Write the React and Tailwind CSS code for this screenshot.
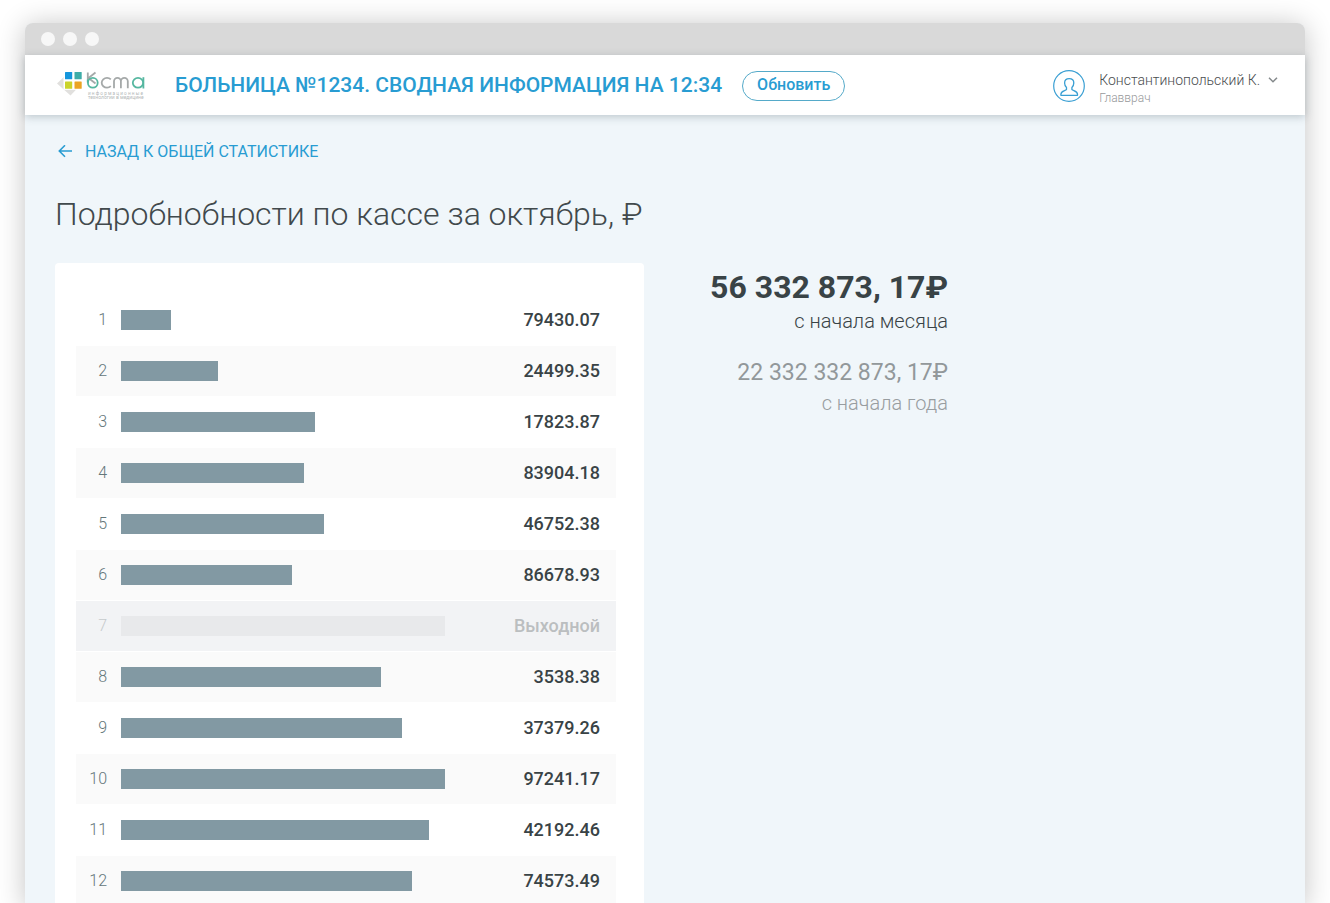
const days = [
  { day: 1, value: "79430.07", bar: 50 },
  { day: 2, value: "24499.35", bar: 97 },
  { day: 3, value: "17823.87", bar: 194 },
  { day: 4, value: "83904.18", bar: 183 },
  { day: 5, value: "46752.38", bar: 203 },
  { day: 6, value: "86678.93", bar: 171 },
  { day: 7, value: "Выходной", bar: 324, off: true },
  { day: 8, value: "3538.38", bar: 260 },
  { day: 9, value: "37379.26", bar: 281 },
  { day: 10, value: "97241.17", bar: 324 },
  { day: 11, value: "42192.46", bar: 308 },
  { day: 12, value: "74573.49", bar: 291 },
];

const longestBar = 324;

function Logo() {
  return (
    <svg width="90" height="34" viewBox="0 0 90 34" role="img" aria-label="Коста">
      <path d="M0 14.500 12.500 2.500 25 14.500 13.500 26.500Z" fill="#e1e0de" />
      <path d="M6.500 2h19v18.800h-19z" fill="#fff" />
      <rect x="8" y="3" width="7.200" height="7.200" rx="0.500" fill="#1596dc" />
      <rect x="17.500" y="3" width="7.200" height="7.200" rx="0.500" fill="#3eada8" />
      <rect x="8" y="12.500" width="7.200" height="7.200" rx="0.500" fill="#cad32a" />
      <rect x="17.500" y="12.500" width="7.200" height="7.200" rx="0.500" fill="#eba423" />
      <g fill="none" strokeWidth="1.800">
        <g stroke="#a5a9a9">
          <path d="M30.800 3.500v10M38.500 3.500l-7 5.500 7 5.500" />
          <path d="M53.800 10.400a5.300 4.900 0 1 0 0 6.800" />
          <path d="M57 19.300v-7a3.400 3.400 0 0 1 6.900 0V19.300M63.900 19.300v-7a3.400 3.400 0 0 1 6.900 0V19.300" />
        </g>
        <g stroke="#55b7a0">
          <path d="M30.800 10.500v3" />
          <circle cx="35.800" cy="13.800" r="4.900" />
          <ellipse cx="81" cy="13.800" rx="5.200" ry="4.900" />
          <path d="M86.400 8.200v11.300" />
        </g>
      </g>
      <g fill="#b4b8b8" fontFamily="Roboto, sans-serif">
        <text x="31" y="25.500" fontSize="4.700">и н ф о р м а ц и о н н ы е</text>
        <text x="31" y="30.300" fontSize="5">технологии в медицине</text>
      </g>
    </svg>
  );
}

function UserIcon() {
  return (
    <svg width="32" height="32" viewBox="0 0 32 32" fill="none" stroke="#3a9fd3" aria-hidden="true">
      <circle cx="16" cy="16" r="15.300" strokeWidth="1.200" />
      <path
        strokeWidth="1.300"
        strokeLinejoin="round"
        d="M13.500 17.500C12 16 11.600 14.500 11.600 13c0-2.800 1.700-4.300 4.600-4.300s4.600 1.500 4.600 4.300c0 1.500-.4 3-1.900 4.500v2c1.300 1.300 5.600 1.300 5.600 4.700v1.100H7.900v-1.100c0-3.400 4.300-3.400 5.600-4.700z"
      />
    </svg>
  );
}

function Header() {
  return (
    <header className="relative flex h-15 items-center bg-white pt-0.5 pl-8 pr-[27px] shadow-[0_2px_8px_rgba(60,80,90,0.28)]">
      <Logo />
      <h1 className="ml-7 pb-0.5 text-[21px] leading-6 font-medium whitespace-nowrap text-[#289cd2]">
        БОЛЬНИЦА №1234. СВОДНАЯ ИНФОРМАЦИЯ НА 12:34
      </h1>
      <button
        type="button"
        className="ml-5 h-[30px] rounded-full border border-[#55aac9] px-3.5 pb-0.5 text-base leading-5 font-medium text-[#289cd2]"
      >
        Обновить
      </button>
      <button type="button" className="ml-auto flex items-center gap-3.5 text-left">
        <UserIcon />
        <span className="flex flex-col pt-1">
          <span className="flex items-center gap-2 text-sm leading-5 font-light text-[#4a4d4f]">
            Константинопольский К.
            <svg width="10" height="6" viewBox="0 0 10 6" fill="none" stroke="#858a8c" strokeWidth="1.500" aria-hidden="true">
              <path d="m1 .7 4 4 4-4" />
            </svg>
          </span>
          <span className="text-xs leading-4 font-light text-[#97999b]">Главврач</span>
        </span>
      </button>
    </header>
  );
}

function DayRow({ day, value, bar, off }) {
  const background = off ? "bg-[#f2f3f5]" : day % 2 === 0 ? "bg-[#fafafa]" : "bg-white";
  return (
    <tr className={`${background} h-[51px]`}>
      <th
        scope="row"
        className={`w-[31px] border-b border-white p-0 text-right text-base leading-5 font-light ${off ? "text-[#c6cacc]" : "text-[#64777a]"}`}
      >
        {day}
      </th>
      <td className="border-b border-white py-0 pl-3.5 pr-0">
        <div
          className={`h-5 ${off ? "bg-[#e8e9eb]" : "bg-[#8299a3]"}`}
          style={{ width: `${(bar / longestBar) * 100}%` }}
        />
      </td>
      <td
        className={`w-[171px] border-b border-white py-0 pl-0 pr-4 text-right text-lg leading-5 font-medium ${off ? "text-[#bbbec0]" : "text-[#394346]"}`}
      >
        {value}
      </td>
    </tr>
  );
}

export default function App() {
  return (
    <div className="flex min-h-screen flex-col bg-white px-[25px] pt-[23px] font-[Roboto,sans-serif]">
      <div className="flex grow flex-col rounded-t-lg bg-[#f0f6fa] shadow-[0_2px_28px_rgba(0,0,0,0.24)]">
        <div className="flex h-8 items-center gap-2 rounded-t-lg bg-[#d9d9d9] px-4">
          <span className="size-3.5 rounded-full bg-[#f7f7f7]" />
          <span className="size-3.5 rounded-full bg-[#f7f7f7]" />
          <span className="size-3.5 rounded-full bg-[#f7f7f7]" />
        </div>
        <Header />
        <main className="px-[30px] pt-[25px]">
          <a href="#stats" className="inline-flex items-center gap-3 pl-[3px] text-base leading-6 text-[#289cd2]">
            <svg width="15" height="14" viewBox="0 0 15 14" fill="none" stroke="currentColor" strokeWidth="1.600" aria-hidden="true">
              <path d="M14 6H1.500M7 .3 1.300 6 7 11.700" />
            </svg>
            НАЗАД К ОБЩЕЙ СТАТИСТИКЕ
          </a>
          <h2 className="mt-7 text-[32px] leading-10 font-light text-[#41494c]">
            Подробнобности по кассе за октябрь, ₽
          </h2>
          <div className="mt-[29px] flex items-start">
            <section className="w-[589px] rounded-t-sm bg-white pt-8 pr-7 pl-[21px]">
              <table className="w-full table-fixed border-separate border-spacing-0">
                <tbody>
                  {days.map((row) => (
                    <DayRow key={row.day} {...row} />
                  ))}
                </tbody>
              </table>
            </section>
            <section className="ml-5 w-[284px] text-right text-[#394346]">
              <p className="pt-1 text-[32px] leading-10 font-bold">56 332 873, 17₽</p>
              <p className="text-xl leading-7 font-light">с начала месяца</p>
              <p className="mt-6 text-[23px] leading-7 text-[#92989a]">22 332 332 873, 17₽</p>
              <p className="text-xl leading-8 font-light text-[#989da0]">с начала года</p>
            </section>
          </div>
        </main>
      </div>
    </div>
  );
}
